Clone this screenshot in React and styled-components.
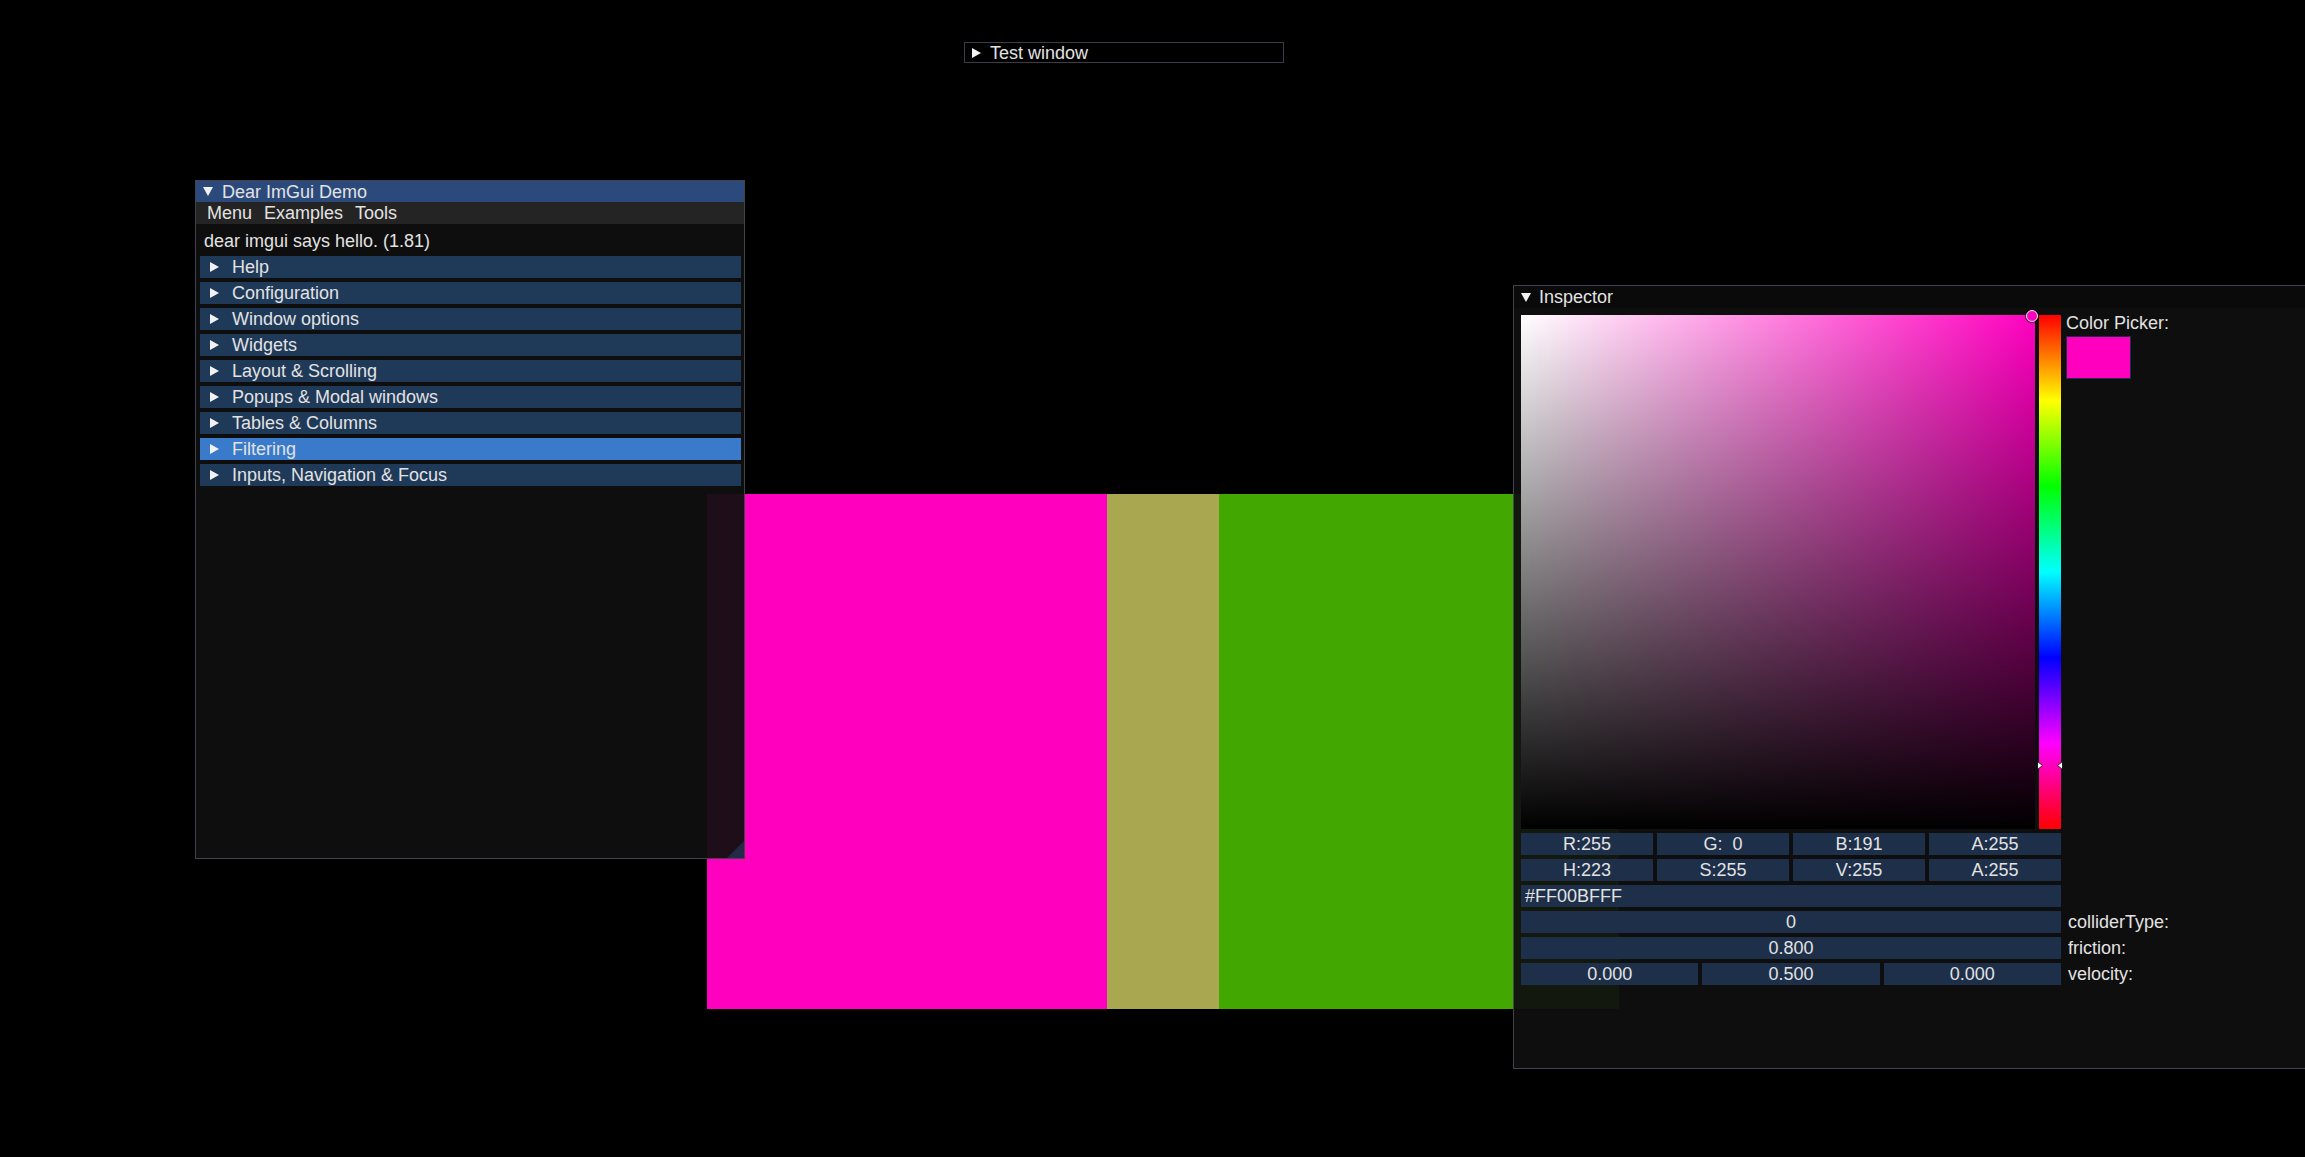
import React from "react";
import styled, { createGlobalStyle } from "styled-components";

const GlobalStyle = createGlobalStyle`
  html, body { margin: 0; padding: 0; background: #000; }
  body {
    font-family: "Liberation Sans", Arial, sans-serif;
    color: #e2e2e2;
  }
`;

const Desktop = styled.div`
  position: relative;
  width: 2305px;
  height: 1157px;
  overflow: hidden;
  background: #000;
  font-size: 18px;
`;

const Canvas = styled.div`
  position: absolute;
  left: 707px;
  top: 494px;
  width: 912px;
  height: 515px;
  display: flex;
`;

const Strip = styled.div`
  flex: 0 0 ${(p) => p.$w}px;
  background: ${(p) => p.$color};
`;

const Window = styled.div`
  position: absolute;
  left: ${(p) => p.$x}px;
  top: ${(p) => p.$y}px;
  width: ${(p) => p.$w}px;
  height: ${(p) => p.$h}px;
  box-sizing: border-box;
  border: 1px solid rgba(110, 110, 128, 0.55);
  background: ${(p) => p.$bg || "rgba(15,15,15,0.94)"};
  display: flex;
  flex-direction: column;
  overflow: hidden;
`;

const TitleBar = styled.div`
  flex: 0 0 ${(p) => p.$h || 21}px;
  display: flex;
  align-items: center;
  gap: ${(p) => p.$gap || 9}px;
  padding-left: 7px;
  background: ${(p) => p.$bg || "transparent"};
  white-space: nowrap;
  line-height: 1;
`;

const Tri = styled.svg`
  flex: 0 0 auto;
  display: block;
`;

const RightTri = () => (
  <Tri width="9" height="10" viewBox="0 0 9 10">
    <polygon points="0,0 9,5 0,10" fill="#f2f2f2" />
  </Tri>
);

const DownTri = () => (
  <Tri width="10" height="9" viewBox="0 0 10 9">
    <polygon points="0,0 10,0 5,9" fill="#f2f2f2" />
  </Tri>
);

const MenuBar = styled.div`
  flex: 0 0 22px;
  display: flex;
  align-items: center;
  gap: 12px;
  padding-left: 11px;
  background: #242424;
  line-height: 1;
`;

const MenuItem = styled.span`
  display: block;
`;

const DemoContent = styled.div`
  flex: 1;
  display: flex;
  flex-direction: column;
  gap: 4px;
  padding: 6px 3px 0 4px;
`;

const Intro = styled.div`
  height: 22px;
  display: flex;
  align-items: center;
  padding-left: 4px;
`;

const Header = styled.div`
  height: 22px;
  display: flex;
  align-items: center;
  gap: 13px;
  padding-left: 10px;
  background: ${(p) => (p.$active ? "#397bca" : "#1f3958")};
  line-height: 1;
`;

const ResizeGrip = styled.div`
  position: absolute;
  right: 0;
  bottom: 0;
  width: 17px;
  height: 17px;
  background: rgba(66, 150, 250, 0.2);
  clip-path: polygon(100% 0, 100% 100%, 0 100%);
`;

const InspectorContent = styled.div`
  display: flex;
  flex-direction: column;
  gap: 4px;
  padding: 7px 0 0 7px;
`;

const PickerRow = styled.div`
  display: flex;
  align-items: flex-start;
`;

const SVSquare = styled.div`
  position: relative;
  width: 514px;
  height: 514px;
  background: linear-gradient(to top, #000, rgba(0, 0, 0, 0)),
    linear-gradient(to right, #fff, #ff00bf);
`;

const SVMarker = styled.div`
  position: absolute;
  left: 505px;
  top: -5px;
  width: 10px;
  height: 10px;
  border-radius: 50%;
  border: 1.5px solid #f0f0f0;
  background: #ff00bf;
  box-shadow: 0 0 0 1px rgba(0, 0, 0, 0.6);
`;

const HueBar = styled.div`
  position: relative;
  margin-left: 4px;
  width: 22px;
  height: 514px;
  background: linear-gradient(
    to bottom,
    #f00 0%,
    #ff0 16.66%,
    #0f0 33.33%,
    #0ff 50%,
    #00f 66.66%,
    #f0f 83.33%,
    #f00 100%
  );
`;

const HueArrow = styled.svg`
  position: absolute;
  top: 446px;
  ${(p) => (p.$side === "left" ? "left: -2px;" : "right: -2px;")}
`;

const SideCol = styled.div`
  display: flex;
  flex-direction: column;
  gap: 4px;
  margin-left: 5px;
`;

const SideLabel = styled.div`
  height: 17px;
  line-height: 17px;
  white-space: nowrap;
`;

const Swatch = styled.div`
  width: 63px;
  height: 41px;
  border: 1px solid #1d2f49;
  background: #ff00bf;
`;

const Row = styled.div`
  display: flex;
  align-items: center;
`;

const Fields = styled.div`
  width: 540px;
  display: flex;
  gap: 4px;
`;

const Field = styled.div`
  flex: 1;
  height: 22px;
  display: flex;
  align-items: center;
  justify-content: ${(p) => (p.$left ? "flex-start" : "center")};
  padding-left: ${(p) => (p.$left ? "4px" : "0")};
  background: #1d2f49;
  white-space: pre;
  line-height: 1;
`;

const RowLabel = styled.div`
  padding-left: 7px;
  white-space: nowrap;
  line-height: 1;
`;

const headers = [
  "Help",
  "Configuration",
  "Window options",
  "Widgets",
  "Layout & Scrolling",
  "Popups & Modal windows",
  "Tables & Columns",
  "Filtering",
  "Inputs, Navigation & Focus",
];

const Arrow = ({ side }) => (
  <HueArrow $side={side} width="6" height="9" viewBox="0 0 6 9">
    {side === "left" ? (
      <polygon points="0.5,0.5 5.5,4.5 0.5,8.5" fill="#fff" stroke="#000" strokeWidth="0.8" />
    ) : (
      <polygon points="5.5,0.5 0.5,4.5 5.5,8.5" fill="#fff" stroke="#000" strokeWidth="0.8" />
    )}
  </HueArrow>
);

export default function App() {
  return (
    <>
      <GlobalStyle />
      <Desktop>
        <Canvas>
          <Strip $w={400} $color="#ff00bf" />
          <Strip $w={112} $color="#a9a850" />
          <Strip $w={400} $color="#42a800" />
        </Canvas>

        <Window $x={964} $y={42} $w={320} $h={21} $bg="rgba(0,0,0,0.51)">
          <TitleBar $h={19} $gap={9}>
            <RightTri />
            <span>Test window</span>
          </TitleBar>
        </Window>

        <Window $x={195} $y={180} $w={550} $h={679}>
          <TitleBar $h={21} $gap={9} $bg="#2b4a7b">
            <DownTri />
            <span>Dear ImGui Demo</span>
          </TitleBar>
          <MenuBar>
            <MenuItem>Menu</MenuItem>
            <MenuItem>Examples</MenuItem>
            <MenuItem>Tools</MenuItem>
          </MenuBar>
          <DemoContent>
            <Intro>dear imgui says hello. (1.81)</Intro>
            {headers.map((h) => (
              <Header key={h} $active={h === "Filtering"}>
                <RightTri />
                <span>{h}</span>
              </Header>
            ))}
          </DemoContent>
          <ResizeGrip />
        </Window>

        <Window $x={1513} $y={285} $w={830} $h={784}>
          <TitleBar $h={22} $gap={8} $bg="#0a0a0a">
            <DownTri />
            <span>Inspector</span>
          </TitleBar>
          <InspectorContent>
            <PickerRow>
              <SVSquare>
                <SVMarker />
              </SVSquare>
              <HueBar>
                <Arrow side="left" />
                <Arrow side="right" />
              </HueBar>
              <SideCol>
                <SideLabel>Color Picker:</SideLabel>
                <Swatch />
              </SideCol>
            </PickerRow>
            <Row>
              <Fields>
                <Field>R:255</Field>
                <Field>G:  0</Field>
                <Field>B:191</Field>
                <Field>A:255</Field>
              </Fields>
            </Row>
            <Row>
              <Fields>
                <Field>H:223</Field>
                <Field>S:255</Field>
                <Field>V:255</Field>
                <Field>A:255</Field>
              </Fields>
            </Row>
            <Row>
              <Fields>
                <Field $left>#FF00BFFF</Field>
              </Fields>
            </Row>
            <Row>
              <Fields>
                <Field>0</Field>
              </Fields>
              <RowLabel>colliderType:</RowLabel>
            </Row>
            <Row>
              <Fields>
                <Field>0.800</Field>
              </Fields>
              <RowLabel>friction:</RowLabel>
            </Row>
            <Row>
              <Fields>
                <Field>0.000</Field>
                <Field>0.500</Field>
                <Field>0.000</Field>
              </Fields>
              <RowLabel>velocity:</RowLabel>
            </Row>
          </InspectorContent>
        </Window>
      </Desktop>
    </>
  );
}
